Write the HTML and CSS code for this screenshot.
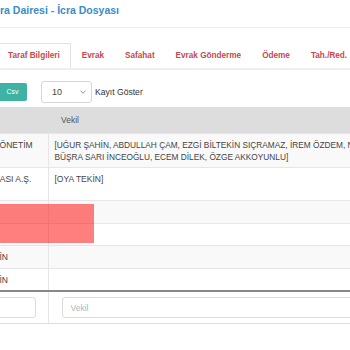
FILE: index.html
```html
<!DOCTYPE html>
<html lang="tr">
<head>
<meta charset="utf-8">
<title>İcra Dosyası</title>
<link rel="stylesheet" href="styles.css">
</head>
<body>
<header class="page-head">
  <h1 class="title">Ankara 5. İcra Dairesi - İcra Dosyası</h1>
</header>

<nav class="tabs">
  <a class="tab active">Taraf Bilgileri</a>
  <a class="tab">Evrak</a>
  <a class="tab">Safahat</a>
  <a class="tab">Evrak Gönderme</a>
  <a class="tab">Ödeme</a>
  <a class="tab">Tah./Red.</a>
</nav>

<div class="toolbar">
  <button class="btn-csv">Csv</button>
  <div class="select">
    <span>10</span>
    <svg class="chev" width="6" height="4" viewBox="0 0 6 4"><path d="M0.5 0.8 L3 3.2 L5.5 0.8" fill="none" stroke="#888" stroke-width="0.9"/></svg>
  </div>
  <span class="show-label">Kayıt Göster</span>
</div>

<table class="grid">
  <colgroup><col class="c1"><col class="c2"></colgroup>
  <thead>
    <tr><th>Taraf</th><th>Vekil</th></tr>
  </thead>
  <tbody>
    <tr class="multi">
      <td>MERKEZ SİTESİ YÖNETİM</td>
      <td>[UĞUR ŞAHİN, ABDULLAH ÇAM, EZGİ BİLTEKİN SIÇRAMAZ, İREM ÖZDEM, NURCAN YILMAZ,<br>BÜŞRA SARI İNCEOĞLU, ECEM DİLEK, ÖZGE AKKOYUNLU]</td>
    </tr>
    <tr class="tall">
      <td>TÜRKİYE İŞ BANKASI A.Ş.</td>
      <td>[OYA TEKİN]</td>
    </tr>
    <tr><td>&nbsp;</td><td></td></tr>
    <tr><td>&nbsp;</td><td></td></tr>
    <tr><td>MUSTAFA ALİ TEKİN</td><td></td></tr>
    <tr><td>MUSTAFA ALİ TEKİN</td><td></td></tr>
  </tbody>
  <tfoot>
    <tr>
      <td><input class="filter" type="text" placeholder="Taraf"></td>
      <td><input class="filter" type="text" placeholder="Vekil"></td>
    </tr>
  </tfoot>
</table>

<div class="highlight"></div>
</body>
</html>
```

FILE: styles.css
```css
html, body {
  margin: 0;
  padding: 0;
}
body {
  width: 350px;
  height: 350px;
  overflow: hidden;
  position: relative;
  background: #ffffff;
  font-family: "Liberation Sans", Arial, sans-serif;
  color: #444;
}

.page-head {
  box-sizing: border-box;
  height: 28px;
  border-bottom: 1px solid #eeeeee;
  padding-top: 4px;
}
.title {
  margin: 0 0 0 -59px;
  font-size: 10.5px;
  line-height: 13px;
  font-weight: bold;
  color: #3b8cc9;
  white-space: nowrap;
}

.tabs {
  display: flex;
  margin: 15px 0 0 -3px;
  border-bottom: 2px solid #eeeeee;
  white-space: nowrap;
}
.tab {
  box-sizing: border-box;
  height: 25px;
  padding: 0 10px;
  margin-right: 1px;
  font-size: 8.2px;
  line-height: 25px;
  font-weight: bold;
  color: #c8474a;
}
.tab.active {
  border: 1px solid #e2e2e2;
  border-bottom: 0;
  line-height: 24px;
  background: #fff;
}

.toolbar {
  display: flex;
  align-items: center;
  height: 22px;
  margin: 11px 0 0 -2px;
}
.btn-csv {
  width: 29px;
  height: 18px;
  padding: 0;
  border: 0;
  border-radius: 2px;
  background: #3fb3a3;
  color: #fff;
  font-family: "Liberation Sans", Arial, sans-serif;
  font-size: 7px;
  line-height: 18px;
}
.select {
  box-sizing: border-box;
  width: 51px;
  height: 22px;
  margin-left: 14px;
  padding: 0 5px 0 10px;
  display: flex;
  align-items: center;
  justify-content: space-between;
  border: 1px solid #d6d6d6;
  border-radius: 3px;
  font-size: 9px;
  color: #444;
}
.chev {
  display: block;
}
.show-label {
  margin-left: 3px;
  font-size: 8.6px;
  color: #333;
}

.grid {
  margin: 4px 0 0 -79px;
  border-collapse: collapse;
  table-layout: fixed;
  width: 547px;
  font-size: 8.5px;
  color: #444;
}
.c1 { width: 127px; }
.c2 { width: 420px; }
.grid th {
  height: 26px;
  padding: 0 13px;
  background: #dddddd;
  font-weight: normal;
  text-align: left;
  color: #555;
}
.grid td {
  padding: 5px 6px 4px;
  line-height: 12.5px;
  vertical-align: top;
  border-top: 1px solid #e6e6e6;
  white-space: nowrap;
  overflow: hidden;
}
.grid td:first-child {
  border-right: 1px solid #e6e6e6;
}
.grid tbody tr:nth-child(odd) td {
  background: #f9f9f9;
}
.grid tbody tr.multi td {
  line-height: 12px;
}
.grid tbody tr.multi td:last-child {
  font-size: 8.3px;
}
.grid tbody tr.tall {
  height: 33px;
}
.grid tfoot td {
  border-top: 2px solid #888;
  border-bottom: 1px solid #dddddd;
  padding: 5px 12px 5px 13px;
  background: #fff;
}
.filter {
  box-sizing: border-box;
  width: 100%;
  height: 21px;
  margin: 0;
  padding: 0 8px;
  border: 1px solid #dcdcdc;
  border-radius: 3px;
  font-family: "Liberation Sans", Arial, sans-serif;
  font-size: 8.5px;
  display: block;
}
.filter::placeholder {
  color: #b5b5b5;
}

.highlight {
  position: absolute;
  left: 0;
  top: 204px;
  width: 94px;
  height: 39px;
  background: rgba(255, 0, 0, 0.5);
}
```
